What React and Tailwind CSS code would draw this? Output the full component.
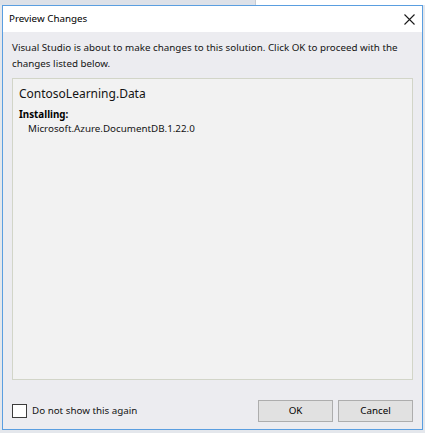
import React from 'react'

export default function App() {
  return (
    <div className="w-[425px] h-[433px] bg-[#e4e7ec] overflow-hidden font-['Noto_Sans',sans-serif] text-black">
      {/* window behind the dialog */}
      <div className="h-[5px] flex">
        <div className="w-[255px] bg-[#dde1e8]" />
        <div className="flex-1 bg-white border-l border-[#c8ccd2]" />
      </div>

      <div className="ml-[2px] w-[421px] h-[425px] border border-[#5a9ee0] bg-[#ececf0] flex flex-col">
        {/* title bar */}
        <div className="h-[26px] bg-white flex items-center justify-between pl-[6px] pr-[7px]">
          <span className="text-[9.8px]">Preview Changes</span>
          <svg width="11" height="11" viewBox="0 0 11 11">
            <path d="M0.5 0.5 L10.5 10.5 M10.5 0.5 L0.5 10.5" stroke="#1a1a1a" strokeWidth="1.1" />
          </svg>
        </div>

        <div className="flex-1 flex flex-col px-[9px]">
          <p className="mt-[8px] text-[9.8px] leading-[16px] text-[#141414]">
            Visual Studio is about to make changes to this solution. Click OK to proceed with the changes listed below.
          </p>

          <div className="mt-[6px] h-[302px] border border-[#d2d5c8] bg-[#f2f2f2] px-[6px] pt-[5px]">
            <div className="text-[12px] leading-[20px] text-[#141414]">ContosoLearning.Data</div>
            <div className="mt-[4px] text-[9.8px] leading-[14px] font-bold">Installing:</div>
            <div className="pl-[9px] text-[9.8px] leading-[13px] text-[#141414]">Microsoft.Azure.DocumentDB.1.22.0</div>
          </div>

          <div className="mt-[20px] flex items-center">
            <div className="w-[15px] h-[14px] border border-[#3c3c3c] bg-white" />
            <span className="ml-[5px] text-[9.8px] text-[#141414]">Do not show this again</span>
            <div className="ml-auto flex gap-[5px]">
              <button className="w-[75px] h-[22px] border border-[#adadad] bg-[#e1e1e1] text-[9.8px]">OK</button>
              <button className="w-[75px] h-[22px] border border-[#adadad] bg-[#e1e1e1] text-[9.8px]">Cancel</button>
            </div>
          </div>
        </div>
      </div>
    </div>
  )
}
